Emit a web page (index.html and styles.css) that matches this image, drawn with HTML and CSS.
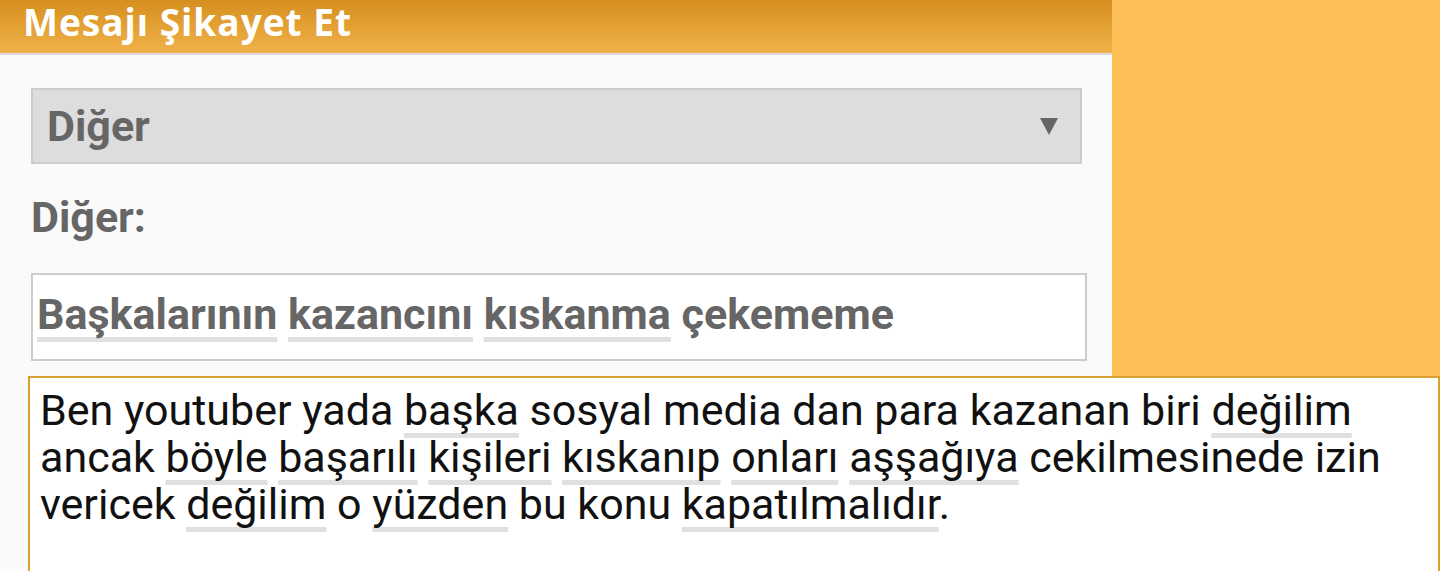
FILE: index.html
```html
<!DOCTYPE html>
<html lang="tr">
<head>
    <meta charset="UTF-8">
    <meta name="viewport" content="width=device-width, initial-scale=1.0">
    <title>Mesajı Şikayet Et</title>
    <link rel="stylesheet" href="styles.css">
</head>
<body>
    <div class="dialog">
        <div class="dialog-title">Mesajı Şikayet Et</div>
        <div class="dialog-body">
            <div class="select">
                <span>Diğer</span>
                <svg class="arrow" width="18" height="18" viewBox="0 0 18 18"><polygon points="0,1 18,1 9,18" fill="#666"/></svg>
            </div>
            <div class="label">Diğer:</div>
            <div class="input"><span class="sp">Başkalarının</span> <span class="sp">kazancını</span> <span class="sp">kıskanma</span> çekememe</div>
            <div class="textarea">Ben youtuber yada <span class="sp">başka</span> sosyal media dan para kazanan biri <span class="sp">değilim</span><br>ancak <span class="sp">böyle</span> <span class="sp">başarılı</span> <span class="sp">kişileri</span> <span class="sp">kıskanıp</span> <span class="sp">onları</span> <span class="sp">aşşağıya</span> cekilmesinede izin<br>vericek <span class="sp">değilim</span> o <span class="sp">yüzden</span> bu konu <span class="sp">kapatılmalıdır</span>.</div>
        </div>
    </div>
</body>
</html>
```

FILE: styles.css
```css
body {
    margin: 0;
    background-color: #fdbe57;
    font-family: Roboto, "Noto Sans", sans-serif;
    overflow: hidden;
}
.dialog {
    width: 1112px;
    height: 571px;
    background-color: #fafafa;
}
.dialog-title {
    height: 53px;
    padding-left: 23px;
    background: linear-gradient(#d68f1f, #f0b24a);
    border-bottom: 2px solid #dcdcdc;
    color: #fff;
    font-family: "Open Sans", Roboto, sans-serif;
    font-size: 37px;
    font-weight: bold;
    letter-spacing: 1px;
    line-height: 43px;
}
.dialog-body {
    padding: 33px 0 0 31px;
}
.select {
    display: flex;
    align-items: center;
    justify-content: space-between;
    padding: 0 22px 0 14px;
    box-sizing: border-box;
    width: 1051px;
    height: 76px;
    background-color: #dddddd;
    border: 2px solid #cccccc;
    color: #666;
    font-size: 43px;
    font-weight: bold;
}
.label {
    margin-top: 28px;
    color: #666;
    font-size: 43px;
    font-weight: bold;
    line-height: 50px;
}
.input {
    margin-top: 31px;
    width: 1056px;
    height: 88px;
    box-sizing: border-box;
    padding: 11px 4px 0;
    background-color: #fff;
    border: 2px solid #cccccc;
    color: #666;
    font-size: 43px;
    font-weight: bold;
    line-height: 56px;
}
.sp {
    text-decoration: underline;
    text-decoration-color: #e0e0e0;
    text-decoration-thickness: 5px;
    text-underline-offset: 8px;
    text-decoration-skip-ink: none;
}
.textarea {
    margin: 15px 0 0 -3px;
    width: 1412px;
    height: 200px;
    box-sizing: border-box;
    padding: 9px 10px;
    background-color: #fff;
    border: 2px solid #d9a030;
    color: #111;
    font-size: 43px;
    line-height: 47px;
}
```
